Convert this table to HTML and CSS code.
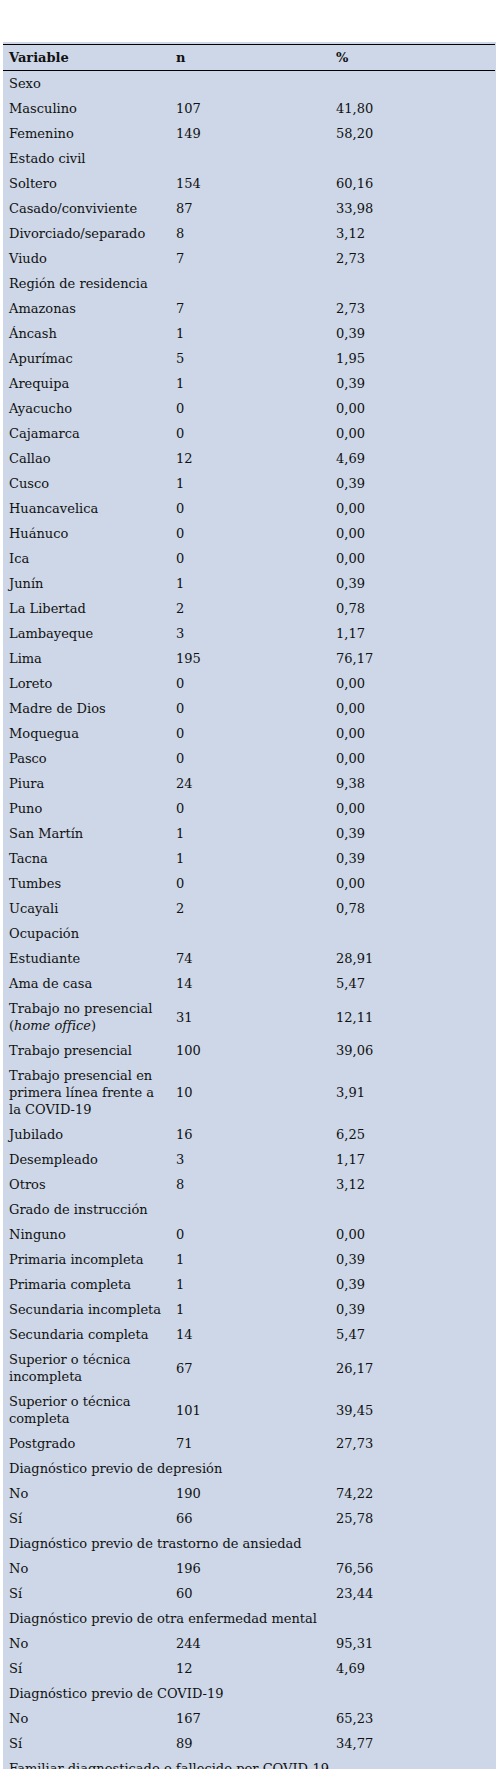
FILE: index.html
```html
<!DOCTYPE html>
<html lang="es">
<head>
<meta charset="utf-8">
<title>Tabla</title>
<link rel="stylesheet" href="styles.css">
</head>
<body>
<div class="wrap">
<table class="data">
<colgroup><col class="c1"><col class="c2"><col class="c3"></colgroup>
<thead>
<tr><th>Variable</th><th>n</th><th>%</th></tr>
</thead>
<tbody>
<tr><td colspan="3">Sexo</td></tr>
<tr><td>Masculino</td><td>107</td><td>41,80</td></tr>
<tr><td>Femenino</td><td>149</td><td>58,20</td></tr>
<tr><td colspan="3">Estado civil</td></tr>
<tr><td>Soltero</td><td>154</td><td>60,16</td></tr>
<tr><td>Casado/conviviente</td><td>87</td><td>33,98</td></tr>
<tr><td>Divorciado/separado</td><td>8</td><td>3,12</td></tr>
<tr><td>Viudo</td><td>7</td><td>2,73</td></tr>
<tr><td colspan="3">Región de residencia</td></tr>
<tr><td>Amazonas</td><td>7</td><td>2,73</td></tr>
<tr><td>Áncash</td><td>1</td><td>0,39</td></tr>
<tr><td>Apurímac</td><td>5</td><td>1,95</td></tr>
<tr><td>Arequipa</td><td>1</td><td>0,39</td></tr>
<tr><td>Ayacucho</td><td>0</td><td>0,00</td></tr>
<tr><td>Cajamarca</td><td>0</td><td>0,00</td></tr>
<tr><td>Callao</td><td>12</td><td>4,69</td></tr>
<tr><td>Cusco</td><td>1</td><td>0,39</td></tr>
<tr><td>Huancavelica</td><td>0</td><td>0,00</td></tr>
<tr><td>Huánuco</td><td>0</td><td>0,00</td></tr>
<tr><td>Ica</td><td>0</td><td>0,00</td></tr>
<tr><td>Junín</td><td>1</td><td>0,39</td></tr>
<tr><td>La Libertad</td><td>2</td><td>0,78</td></tr>
<tr><td>Lambayeque</td><td>3</td><td>1,17</td></tr>
<tr><td>Lima</td><td>195</td><td>76,17</td></tr>
<tr><td>Loreto</td><td>0</td><td>0,00</td></tr>
<tr><td>Madre de Dios</td><td>0</td><td>0,00</td></tr>
<tr><td>Moquegua</td><td>0</td><td>0,00</td></tr>
<tr><td>Pasco</td><td>0</td><td>0,00</td></tr>
<tr><td>Piura</td><td>24</td><td>9,38</td></tr>
<tr><td>Puno</td><td>0</td><td>0,00</td></tr>
<tr><td>San Martín</td><td>1</td><td>0,39</td></tr>
<tr><td>Tacna</td><td>1</td><td>0,39</td></tr>
<tr><td>Tumbes</td><td>0</td><td>0,00</td></tr>
<tr><td>Ucayali</td><td>2</td><td>0,78</td></tr>
<tr><td colspan="3">Ocupación</td></tr>
<tr><td>Estudiante</td><td>74</td><td>28,91</td></tr>
<tr><td>Ama de casa</td><td>14</td><td>5,47</td></tr>
<tr><td>Trabajo no presencial<br>(<em>home office</em>)</td><td>31</td><td>12,11</td></tr>
<tr><td>Trabajo presencial</td><td>100</td><td>39,06</td></tr>
<tr><td>Trabajo presencial en<br>primera línea frente a<br>la COVID-19</td><td>10</td><td>3,91</td></tr>
<tr><td>Jubilado</td><td>16</td><td>6,25</td></tr>
<tr><td>Desempleado</td><td>3</td><td>1,17</td></tr>
<tr><td>Otros</td><td>8</td><td>3,12</td></tr>
<tr><td colspan="3">Grado de instrucción</td></tr>
<tr><td>Ninguno</td><td>0</td><td>0,00</td></tr>
<tr><td>Primaria incompleta</td><td>1</td><td>0,39</td></tr>
<tr><td>Primaria completa</td><td>1</td><td>0,39</td></tr>
<tr><td>Secundaria incompleta</td><td>1</td><td>0,39</td></tr>
<tr><td>Secundaria completa</td><td>14</td><td>5,47</td></tr>
<tr><td>Superior o técnica<br>incompleta</td><td>67</td><td>26,17</td></tr>
<tr><td>Superior o técnica<br>completa</td><td>101</td><td>39,45</td></tr>
<tr><td>Postgrado</td><td>71</td><td>27,73</td></tr>
<tr><td colspan="3">Diagnóstico previo de depresión</td></tr>
<tr><td>No</td><td>190</td><td>74,22</td></tr>
<tr><td>Sí</td><td>66</td><td>25,78</td></tr>
<tr><td colspan="3">Diagnóstico previo de trastorno de ansiedad</td></tr>
<tr><td>No</td><td>196</td><td>76,56</td></tr>
<tr><td>Sí</td><td>60</td><td>23,44</td></tr>
<tr><td colspan="3">Diagnóstico previo de otra enfermedad mental</td></tr>
<tr><td>No</td><td>244</td><td>95,31</td></tr>
<tr><td>Sí</td><td>12</td><td>4,69</td></tr>
<tr><td colspan="3">Diagnóstico previo de COVID-19</td></tr>
<tr><td>No</td><td>167</td><td>65,23</td></tr>
<tr><td>Sí</td><td>89</td><td>34,77</td></tr>
<tr><td colspan="3">Familiar diagnosticado o fallecido por COVID-19</td></tr>
</tbody>
</table>
</div>
</body>
</html>
```

FILE: styles.css
```css
html, body {
  margin: 0;
  padding: 0;
  background: #ffffff;
}

body {
  font-family: "DejaVu Serif", "Liberation Serif", serif;
  font-size: 13px;
  color: #111111;
}

.wrap {
  margin: 42px 4px 0 3px;
  padding-top: 2px;
  background: #cdd7e7;
}

.data {
  width: 492px;
  border-collapse: collapse;
  table-layout: fixed;
}

.c1 { width: 167px; }
.c2 { width: 160px; }
.c3 { width: 165px; }

.data th,
.data td {
  padding: 4px 6px;
  line-height: 17px;
  text-align: left;
  vertical-align: middle;
  white-space: nowrap;
}

.data th {
  font-weight: bold;
  border-top: 1px solid #000000;
  border-bottom: 1px solid #000000;
}

.data em {
  font-style: italic;
}
```
